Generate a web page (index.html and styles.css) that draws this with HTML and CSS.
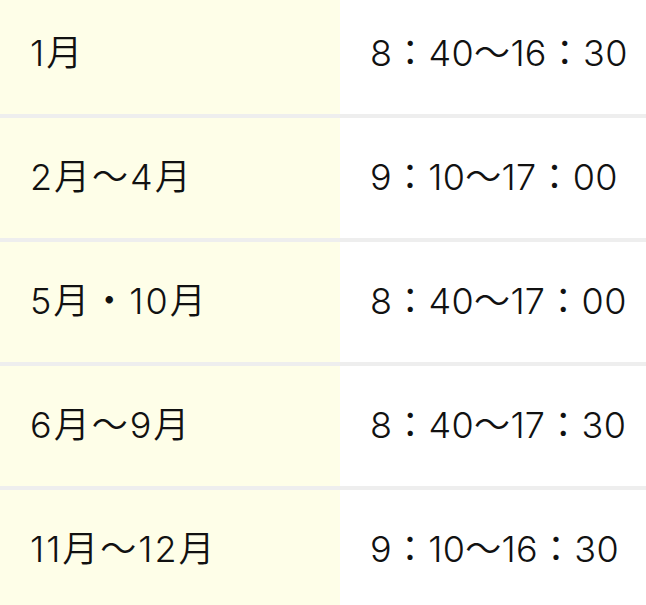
FILE: index.html
```html
<!DOCTYPE html>
<html lang="ja">
<head>
<meta charset="utf-8">
<link rel="stylesheet" href="styles.css">
</head>
<body>
<div class="wrap">
<table class="hours">
<tbody>
<tr><th>1月</th><td>8：40～16：30</td></tr>
<tr><th>2月～4月</th><td>9：10～17：00</td></tr>
<tr><th>5月・10月</th><td>8：40～17：00</td></tr>
<tr><th>6月～9月</th><td>8：40～17：30</td></tr>
<tr><th>11月～12月</th><td>9：10～16：30</td></tr>
</tbody>
</table>
</div>
</body>
</html>
```
FILE: styles.css
```css
html, body {
  margin: 0;
  padding: 0;
  background: #ffffff;
}
.wrap {
  margin-top: -6px;
}
.hours {
  width: 646px;
  border-collapse: collapse;
  font-family: "Inter", "Noto Sans CJK JP", sans-serif;
  font-size: 36px;
  font-weight: 350;
  color: #111111;
}
.hours tr {
  border-bottom: 4px solid #eeeeee;
}
.hours tr:last-child {
  border-bottom: none;
}
.hours th,
.hours td {
  height: 112px;
  padding: 0 0 8px 30px;
  text-align: left;
  font-weight: 350;
  vertical-align: middle;
  white-space: nowrap;
}
.hours th {
  width: 310px;
  background: #fefee8;
  letter-spacing: 2px;
}
.hours td {
  letter-spacing: 0.3px;
}
```
